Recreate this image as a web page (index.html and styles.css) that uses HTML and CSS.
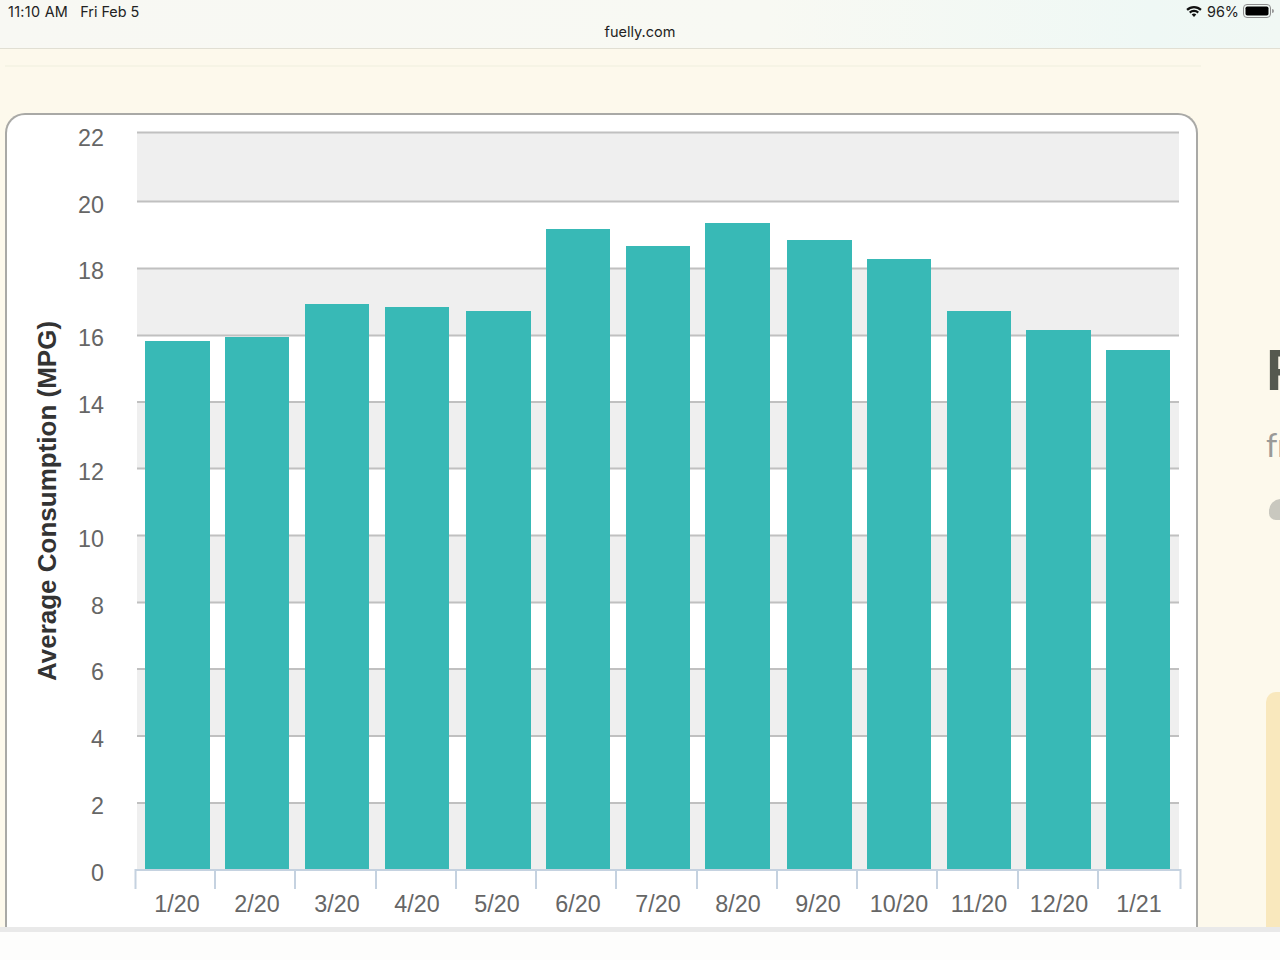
FILE: index.html
```html
<!DOCTYPE html>
<html lang="en">
<head>
<meta charset="utf-8">
<title>fuelly.com</title>
<link rel="stylesheet" href="styles.css">
</head>
<body>
<div class="page">
  <header class="status">
    <div class="status-row">
      <div class="status-left"><span class="status-time">11:10 AM</span><span>Fri Feb 5</span></div>
      <div class="status-right">
        <svg class="wifi" width="16" height="12" viewBox="0 0 16 12"><path d="M0.3 4.1A11 11 0 0 1 15.7 4.1L14.2 5.7A8.8 8.8 0 0 0 1.8 5.7Z"/><path d="M3 6.8A7.2 7.2 0 0 1 13 6.8L11.5 8.4A5 5 0 0 0 4.5 8.4Z"/><path d="M5.7 9.5A3.3 3.3 0 0 1 10.3 9.5L8 12Z"/></svg>
        <span>96%</span>
        <svg class="battery" width="32" height="14" viewBox="0 0 32 14"><rect class="batt-shell" x="0.5" y="0.5" width="27" height="13" rx="3.5"/><rect class="batt-fill" x="2.5" y="2.5" width="23" height="9" rx="1.8"/><path class="batt-nub" d="M29 5V9A2 2 0 0 0 29 5Z"/></svg>
      </div>
    </div>
    <div class="url">fuelly.com</div>
  </header>
  <main class="content">
    <div class="rule"></div>
    <div class="row">
      <section class="card">
        <svg class="chart" width="1191" height="814" viewBox="6 114 1191 814">
          <g class="bands">
            <rect x="137" y="132" width="1042" height="69"/>
            <rect x="137" y="268" width="1042" height="67"/>
            <rect x="137" y="402" width="1042" height="67"/>
            <rect x="137" y="536" width="1042" height="67"/>
            <rect x="137" y="669" width="1042" height="67"/>
            <rect x="137" y="803" width="1042" height="66"/>
          </g>
          <g class="grid">
            <path d="M137 132.500H1179M137 201.500H1179M137 268.500H1179M137 335.500H1179M137 402H1179M137 468.500H1179M137 535.500H1179M137 602.500H1179M137 669H1179M137 736H1179M137 803H1179"/>
          </g>
          <g class="bars">
            <rect x="145" y="341" width="65" height="528"/>
            <rect x="225" y="337" width="64" height="532"/>
            <rect x="305" y="304" width="64" height="565"/>
            <rect x="385" y="307" width="64" height="562"/>
            <rect x="466" y="311" width="65" height="558"/>
            <rect x="546" y="229" width="64" height="640"/>
            <rect x="626" y="246" width="64" height="623"/>
            <rect x="705" y="223" width="65" height="646"/>
            <rect x="787" y="240" width="65" height="629"/>
            <rect x="867" y="259" width="64" height="610"/>
            <rect x="947" y="311" width="64" height="558"/>
            <rect x="1026" y="330" width="65" height="539"/>
            <rect x="1106" y="350" width="64" height="519"/>
          </g>
          <path class="axis" d="M135.500 889V870H1180.500V889M215 870V889M295 870V889M376 870V889M456 870V889M536 870V889M616 870V889M697 870V889M777 870V889M857 870V889M937 870V889M1018 870V889M1098 870V889"/>
          <g class="ylabels">
            <text x="104" y="146">22</text>
            <text x="104" y="213">20</text>
            <text x="104" y="279">18</text>
            <text x="104" y="346">16</text>
            <text x="104" y="413">14</text>
            <text x="104" y="480">12</text>
            <text x="104" y="547">10</text>
            <text x="104" y="614">8</text>
            <text x="104" y="680">6</text>
            <text x="104" y="747">4</text>
            <text x="104" y="814">2</text>
            <text x="104" y="881">0</text>
          </g>
          <g class="xlabels">
            <text x="177" y="912">1/20</text>
            <text x="257" y="912">2/20</text>
            <text x="337" y="912">3/20</text>
            <text x="417" y="912">4/20</text>
            <text x="497" y="912">5/20</text>
            <text x="578" y="912">6/20</text>
            <text x="658" y="912">7/20</text>
            <text x="738" y="912">8/20</text>
            <text x="818" y="912">9/20</text>
            <text x="899" y="912">10/20</text>
            <text x="979" y="912">11/20</text>
            <text x="1059" y="912">12/20</text>
            <text x="1139" y="912">1/21</text>
          </g>
          <text class="ytitle" transform="translate(56 501) rotate(-90)">Average Consumption (MPG)</text>
        </svg>
      </section>
      <aside class="side">
        <div class="side-title">F</div>
        <div class="side-sub">fr</div>
        <div class="side-blob"></div>
        <div class="side-panel"></div>
      </aside>
    </div>
  </main>
  <footer class="strip"></footer>
</div>
</body>
</html>
```
FILE: styles.css
```css
* { box-sizing: border-box; }
html, body { margin: 0; padding: 0; }
body { font-family: "Liberation Sans", Arial, sans-serif; background: #fdfdfc; }
.page { width: 1280px; height: 960px; display: flex; flex-direction: column; overflow: hidden; }

.status {
  height: 49px;
  flex: none;
  padding: 2px 5px 0;
  background: linear-gradient(90deg, #f8f8f3 0%, #f8f9f3 60%, #eff8f5 90%, #f1f8f4 100%);
  border-bottom: 1px solid #e1dfd3;
  color: #222;
  font-family: Inter, "Liberation Sans", sans-serif;
  font-size: 14.400px;
}
.status-row { display: flex; justify-content: space-between; align-items: center; height: 18px; }
.status-left { display: flex; gap: 12px; margin-left: 3px; }
.status-time { letter-spacing: 0.3px; }
.status-right { display: flex; align-items: center; gap: 5px; }
.wifi { fill: #111; }
.battery { margin-left: -1px; }
.batt-shell { fill: none; stroke: #8d8d8d; }
.batt-fill { fill: #000; }
.batt-nub { fill: #999; }
.url { margin-top: 3px; text-align: center; font-size: 14.500px; line-height: 18px; color: #222; }

.content { flex: 1; min-height: 0; background: #fdf9ec; padding-top: 16px; display: flex; flex-direction: column; }
.rule { height: 2px; width: 1196px; margin-left: 5px; background: #f6f4e5; flex: none; }
.row { flex: 1; min-height: 0; margin-top: 46px; display: flex; }
.card {
  margin-left: 5px;
  width: 1193px;
  background: #fff;
  border: 2px solid #a9a9a6;
  border-bottom: 0;
  border-radius: 20px 20px 0 0;
  overflow: hidden;
}
.chart { display: block; margin: -1px 0 0 -1px; font-family: "Liberation Sans", Arial, sans-serif; }
.bands rect { fill: #efefef; }
.grid path { fill: none; stroke: #c0c0c0; stroke-width: 2; }
.bars rect { fill: #38b9b6; }
.axis { fill: none; stroke: #c5d2e0; stroke-width: 2; }
.ylabels text { font-size: 23.300px; fill: #666; text-anchor: end; }
.xlabels text { font-size: 23.300px; fill: #666; text-anchor: middle; }
.ytitle { font-size: 26px; font-weight: 700; fill: #333; text-anchor: middle; }

.side { flex: 1; min-width: 0; overflow: hidden; padding: 224px 0 0 68px; display: flex; flex-direction: column; }
.side-title { font-size: 58px; line-height: 66px; font-weight: 700; color: #55594f; white-space: nowrap; }
.side-sub { margin-top: 23px; margin-left: 0; font-family: Lato, sans-serif; font-size: 32px; line-height: 38px; color: #9a9a98; white-space: nowrap; }
.side-blob { margin-top: 35px; margin-left: 3px; width: 24px; height: 21px; border-radius: 14px 14px 4px 8px; background: #c9c8bf; flex: none; }
.side-panel { margin-top: 172px; margin-left: 0; flex: 1; border-radius: 10px 0 0 0; background: #f9e8bd; }

.strip { height: 33px; flex: none; background: #fdfdfc; border-top: 5px solid #e9e9e9; }
```
